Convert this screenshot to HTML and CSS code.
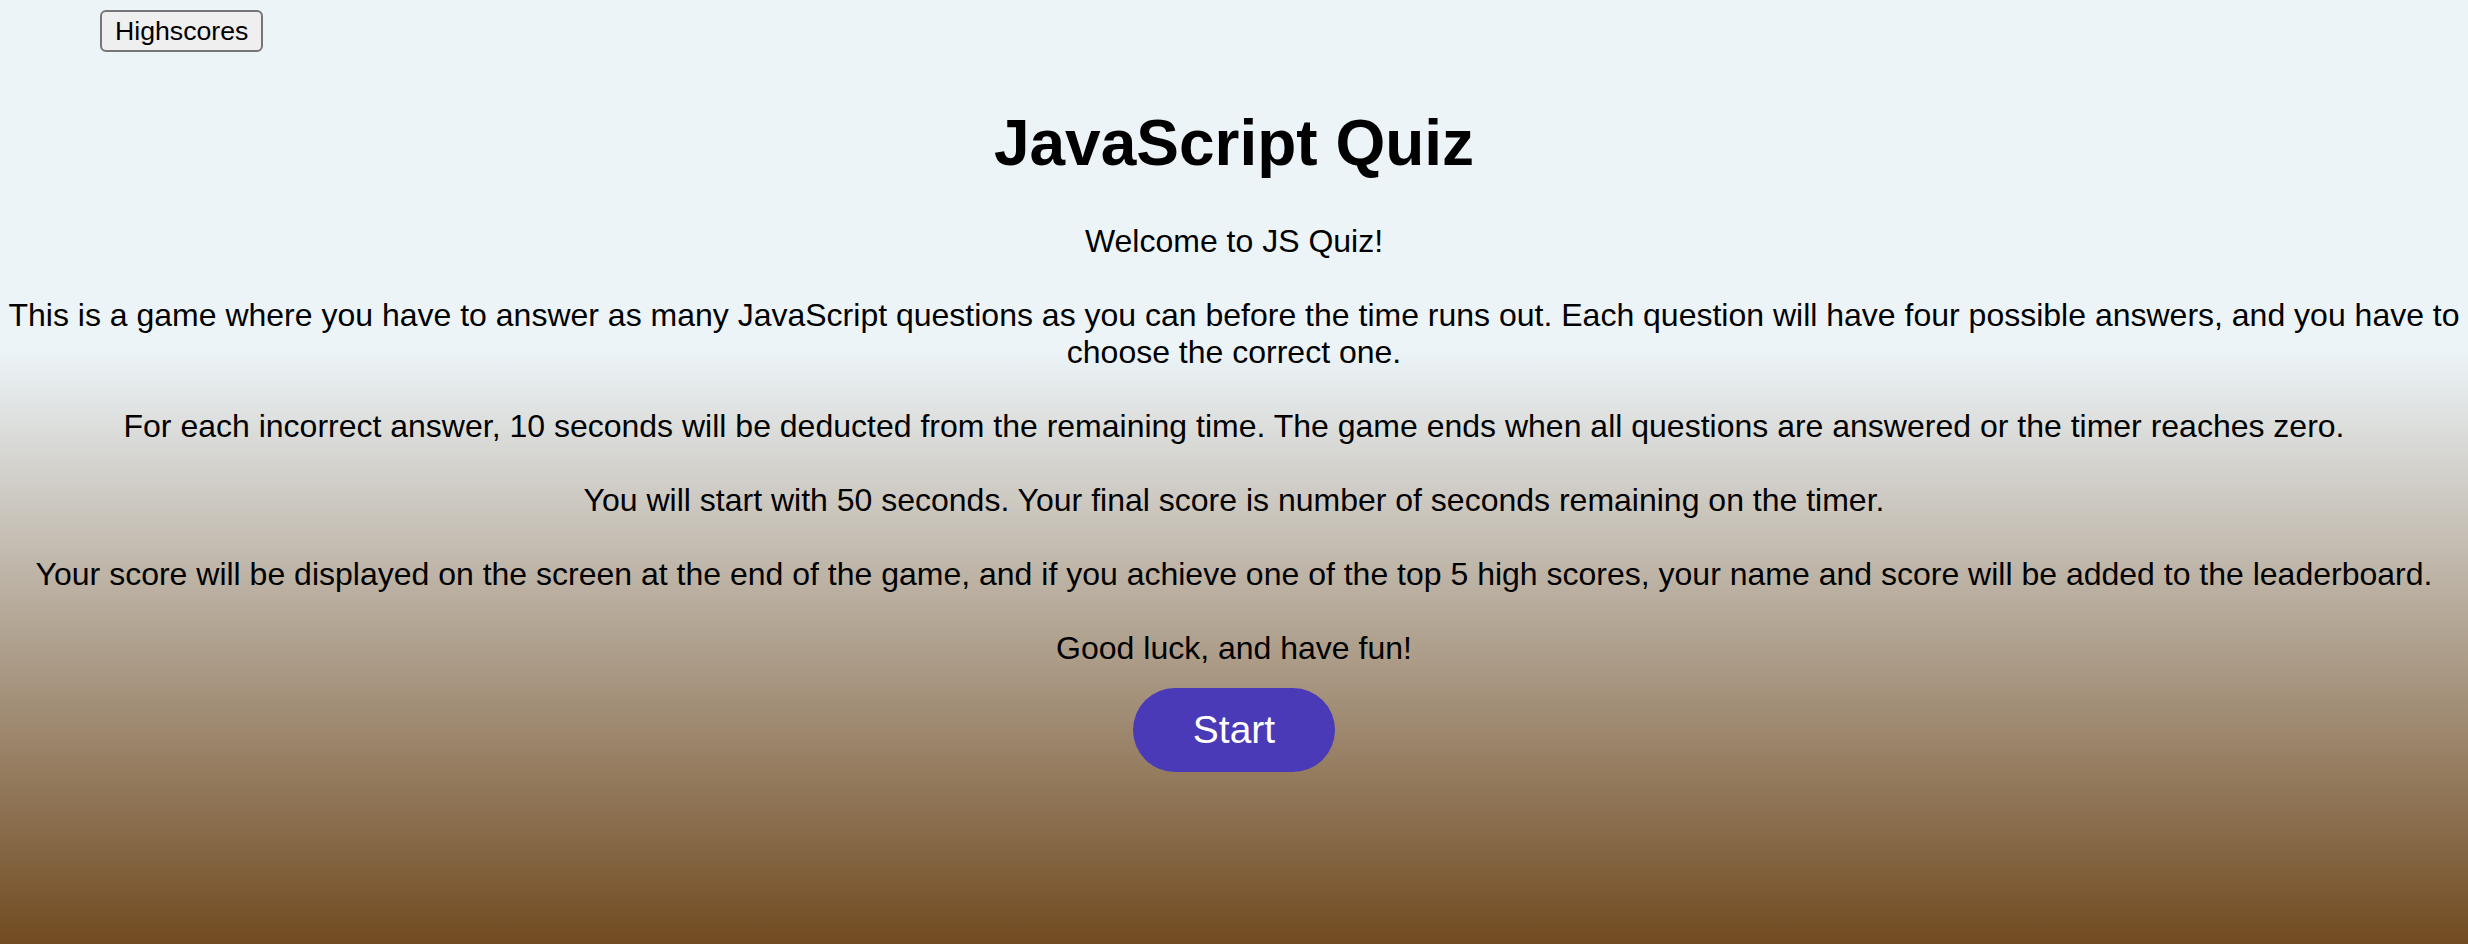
FILE: index.html
```html
<!DOCTYPE html>
<html lang="en">
<head>
<meta charset="utf-8">
<title>JavaScript Quiz</title>
<link rel="stylesheet" href="styles.css">
</head>
<body>
<header class="top-bar">
  <button class="highscores-btn" type="button">Highscores</button>
</header>
<main class="quiz">
  <h1 class="quiz-title">JavaScript Quiz</h1>
  <p class="quiz-intro">Welcome to JS Quiz!<br><br>This is a game where you have to answer as many JavaScript questions as you can before the time runs out. Each question will have four possible answers, and you have to choose the correct one.<br><br>For each incorrect answer, 10 seconds will be deducted from the remaining time. The game ends when all questions are answered or the timer reaches zero.<br><br>You will start with 50 seconds. Your final score is number of seconds remaining on the timer.<br><br>Your score will be displayed on the screen at the end of the game, and if you achieve one of the top 5 high scores, your name and score will be added to the leaderboard.<br><br>Good luck, and have fun!</p>
  <button class="start-btn" type="button">Start</button>
</main>
</body>
</html>
```

FILE: styles.css
```css
html {
  height: 100%;
}

body {
  margin: 0;
  min-height: 100%;
  font-family: "Liberation Sans", Arial, sans-serif;
  color: #000;
  background: linear-gradient(to bottom, #ecf4f8 0%, #ecf4f8 37%, #714b21 100%);
  background-attachment: fixed;
}

.top-bar {
  display: flex;
  padding: 10px 0 11px 100px;
}

.highscores-btn {
  font-family: "Liberation Sans", Arial, sans-serif;
  font-size: 26.67px;
  line-height: 34px;
  padding: 2px 13px;
  border: 2px solid #767676;
  border-radius: 6px;
  background: #efefef;
  color: #000;
}

.quiz {
  display: flex;
  flex-direction: column;
  align-items: center;
  text-align: center;
}

.quiz-title {
  margin: 43px 0;
  font-size: 64px;
  font-weight: bold;
}

.quiz-intro {
  margin: 0;
  font-size: 32px;
}

.start-btn {
  margin-top: 21px;
  padding: 20px 60px;
  border: none;
  border-radius: 42px;
  background: #4a3ab8;
  color: #fff;
  font-family: "Liberation Sans", Arial, sans-serif;
  font-size: 39px;
  line-height: 44px;
}
```
